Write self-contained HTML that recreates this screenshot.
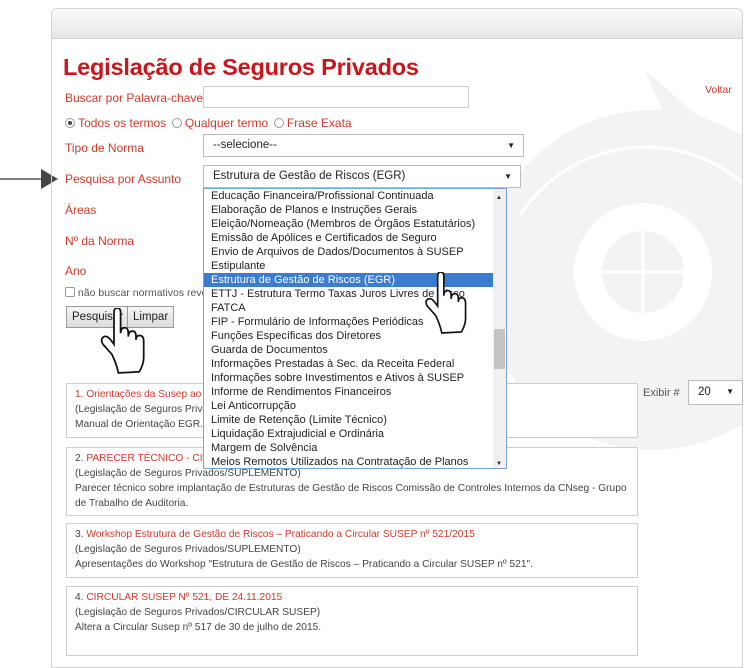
<!DOCTYPE html>
<html><head><meta charset="utf-8"><style>
*{margin:0;padding:0;box-sizing:border-box}
body{width:750px;height:644px;background:#fff;position:relative;overflow:hidden;font-family:"Liberation Sans",Arial,sans-serif}
.abs{position:absolute}
.frame{left:51px;top:8px;width:692px;height:660px;border:1px solid #d4d4d4;border-radius:6px 6px 0 0}
.hdr{left:52px;top:9px;width:690px;height:30px;background:linear-gradient(#fafafa,#e6e6e6);border-bottom:1px solid #d0d0d0;border-radius:6px 6px 0 0}
.lbl{color:#d2392b;font-size:12px}
.title{left:63px;top:54px;font-size:23.5px;font-weight:bold;color:#c9161d;letter-spacing:-0.2px}
.inp{background:#fff;border:1px solid #ccc}
.sel{background:#fff;border:1px solid #bbb;font-size:11.5px;color:#222;padding:6px 9px}
.sel:after{content:"▼";position:absolute;right:8px;top:6px;font-size:8px}
.list{left:203px;top:188px;width:304px;height:281px;border:1px solid #7aa3d6;background:#fff;font-size:11px;color:#222;line-height:14px;overflow:hidden;z-index:5}
.list div{padding-left:7px;white-space:nowrap}
.list .hl{background:#3b7bd0;color:#fff;margin-right:13px}
.sb{right:0;top:0;width:13px;height:279px;background:#f0f0f0}
.box{left:66px;width:572px;border:1px solid #cfcfcf;background:#fff;font-size:10.2px;color:#444;line-height:15px;padding:3px 8px;white-space:nowrap}
.box .r{color:#d2392b}
.btn{border:1px solid #999;background:linear-gradient(#f6f6f6,#dcdcdc);font-size:11.5px;color:#222;padding:4px 5px;height:22px}
</style></head><body>
<svg class="abs" style="left:0;top:0" width="750" height="644">
<defs><clipPath id="c"><rect x="52" y="40" width="690" height="620"/></clipPath></defs>
<g clip-path="url(#c)">
<circle cx="652" cy="280" r="170" fill="#f3f3f3"/>
<path d="M645 70 L760 170 L700 200 Z" fill="#f3f3f3"/>
<path d="M520 215 A150 150 0 0 1 745 185" stroke="#fff" stroke-width="3" fill="none"/>
<circle cx="643" cy="272" r="55" fill="none" stroke="#fff" stroke-width="28"/>
<line x1="643" y1="203" x2="643" y2="341" stroke="#fff" stroke-width="3"/>
<line x1="574" y1="272" x2="712" y2="272" stroke="#fff" stroke-width="3"/>
</g>
<line x1="0" y1="179" x2="44" y2="179" stroke="#555" stroke-width="1.5"/>
<path d="M41 169 L58 179 L41 189 Z" fill="#444"/>
</svg>
<div class="abs frame"></div>
<div class="abs hdr"></div>
<div class="abs title">Legislação de Seguros Privados</div>
<div class="abs lbl" style="left:705px;top:84px;font-size:10.5px">Voltar</div>
<div class="abs lbl" style="left:65px;top:91px">Buscar por Palavra-chave</div>
<div class="abs inp" style="left:203px;top:86px;width:266px;height:22px"></div>
<div class="abs lbl" style="left:65px;top:116px">
<span style="display:inline-block;width:10px;height:10px;border:1px solid #999;border-radius:50%;vertical-align:-1px;position:relative"><span style="position:absolute;left:2px;top:2px;width:4px;height:4px;border-radius:50%;background:#444"></span></span> Todos os termos
<span style="display:inline-block;width:10px;height:10px;border:1px solid #999;border-radius:50%;vertical-align:-1px;margin-left:2px"></span> Qualquer termo
<span style="display:inline-block;width:10px;height:10px;border:1px solid #999;border-radius:50%;vertical-align:-1px;margin-left:2px"></span> Frase Exata</div>
<div class="abs lbl" style="left:65px;top:141px">Tipo de Norma</div>
<div class="abs sel" style="left:203px;top:134px;width:321px;height:23px;padding-top:4px">--selecione--</div>
<div class="abs lbl" style="left:65px;top:172px">Pesquisa por Assunto</div>
<div class="abs sel" style="left:203px;top:165px;width:318px;height:23px;padding-top:4px">Estrutura de Gestão de Riscos (EGR)</div>
<div class="abs lbl" style="left:65px;top:203px">Áreas</div>
<div class="abs lbl" style="left:65px;top:234px">Nº da Norma</div>
<div class="abs lbl" style="left:65px;top:264px">Ano</div>
<div class="abs" style="left:65px;top:287px;font-size:10.5px;color:#555"><span style="display:inline-block;width:10px;height:10px;border:1px solid #999;border-radius:2px;vertical-align:-1px"></span> não buscar normativos revogados</div>
<div class="abs btn" style="left:66px;top:306px">Pesquisar</div>
<div class="abs btn" style="left:127px;top:306px">Limpar</div>
<div class="abs list">
<div>Educação Financeira/Profissional Continuada</div>
<div>Elaboração de Planos e Instruções Gerais</div>
<div>Eleição/Nomeação (Membros de Órgãos Estatutários)</div>
<div>Emissão de Apólices e Certificados de Seguro</div>
<div>Envio de Arquivos de Dados/Documentos à SUSEP</div>
<div>Estipulante</div>
<div class="hl">Estrutura de Gestão de Riscos (EGR)</div>
<div>ETTJ - Estrutura Termo Taxas Juros Livres de Risco</div>
<div>FATCA</div>
<div>FIP - Formulário de Informações Periódicas</div>
<div>Funções Específicas dos Diretores</div>
<div>Guarda de Documentos</div>
<div>Informações Prestadas à Sec. da Receita Federal</div>
<div>Informações sobre Investimentos e Ativos à SUSEP</div>
<div>Informe de Rendimentos Financeiros</div>
<div>Lei Anticorrupção</div>
<div>Limite de Retenção (Limite Técnico)</div>
<div>Liquidação Extrajudicial e Ordinária</div>
<div>Margem de Solvência</div>
<div>Meios Remotos Utilizados na Contratação de Planos</div>
<div class="abs sb"><div class="abs" style="left:1px;top:140px;width:11px;height:40px;background:#c4c4c4;padding:0"></div><div class="abs" style="left:3px;top:2px;font-size:6px;padding:0">▲</div><div class="abs" style="left:3px;top:268px;font-size:6px;padding:0">▼</div></div>
</div>
<div class="abs lbl" style="left:643px;top:387px;font-size:11px;color:#555">Exibir #</div>
<div class="abs sel" style="left:688px;top:380px;width:55px;height:25px;padding-top:5px">20</div>
<div class="abs box" style="top:383px;height:55px"><span class="r">1. Orientações da Susep ao Mercado</span><br>(Legislação de Seguros Privados/SUPLEMENTO)<br>Manual de Orientação EGR.</div>
<div class="abs box" style="top:447px;height:69px;white-space:normal">2. <span class="r">PARECER TÉCNICO - CIRCULAR SUSEP</span><br>(Legislação de Seguros Privados/SUPLEMENTO)<br>Parecer técnico sobre implantação de Estruturas de Gestão de Riscos Comissão de Controles Internos da CNseg - Grupo<br>de Trabalho de Auditoria.</div>
<div class="abs box" style="top:523px;height:55px">3. <span class="r">Workshop Estrutura de Gestão de Riscos – Praticando a Circular SUSEP nº 521/2015</span><br>(Legislação de Seguros Privados/SUPLEMENTO)<br>Apresentações do Workshop "Estrutura de Gestão de Riscos – Praticando a Circular SUSEP nº 521".</div>
<div class="abs box" style="top:586px;height:70px">4. <span class="r">CIRCULAR SUSEP Nº 521, DE 24.11.2015</span><br>(Legislação de Seguros Privados/CIRCULAR SUSEP)<br>Altera a Circular Susep nº 517 de 30 de julho de 2015.</div>
<svg class="abs" style="left:98px;top:308px;z-index:6" width="54" height="66" viewBox="0 0 46 60"><path d="M11 42 L3 33 Q0 28 4 26 Q7 25 10 29 L13 33 L13 4 Q13 0 16 0 Q19 0 19 4 L19 23 Q19 18 23 18 Q26 18 26 23 L26 26 Q26 21 30 21 Q33 21 33 26 L33 29 Q33 25 36 25 Q40 25 40 30 L40 45 Q40 51 36 58 L17 59 Q15 50 11 42 Z" fill="#fff" stroke="#111" stroke-width="1.6"/></svg>
<svg class="abs" style="left:423px;top:272px;z-index:6" width="50" height="62" viewBox="0 0 46 60"><path d="M11 42 L3 33 Q0 28 4 26 Q7 25 10 29 L13 33 L13 4 Q13 0 16 0 Q19 0 19 4 L19 23 Q19 18 23 18 Q26 18 26 23 L26 26 Q26 21 30 21 Q33 21 33 26 L33 29 Q33 25 36 25 Q40 25 40 30 L40 45 Q40 51 36 58 L17 59 Q15 50 11 42 Z" fill="#fff" stroke="#111" stroke-width="1.6"/></svg>
</body></html>
